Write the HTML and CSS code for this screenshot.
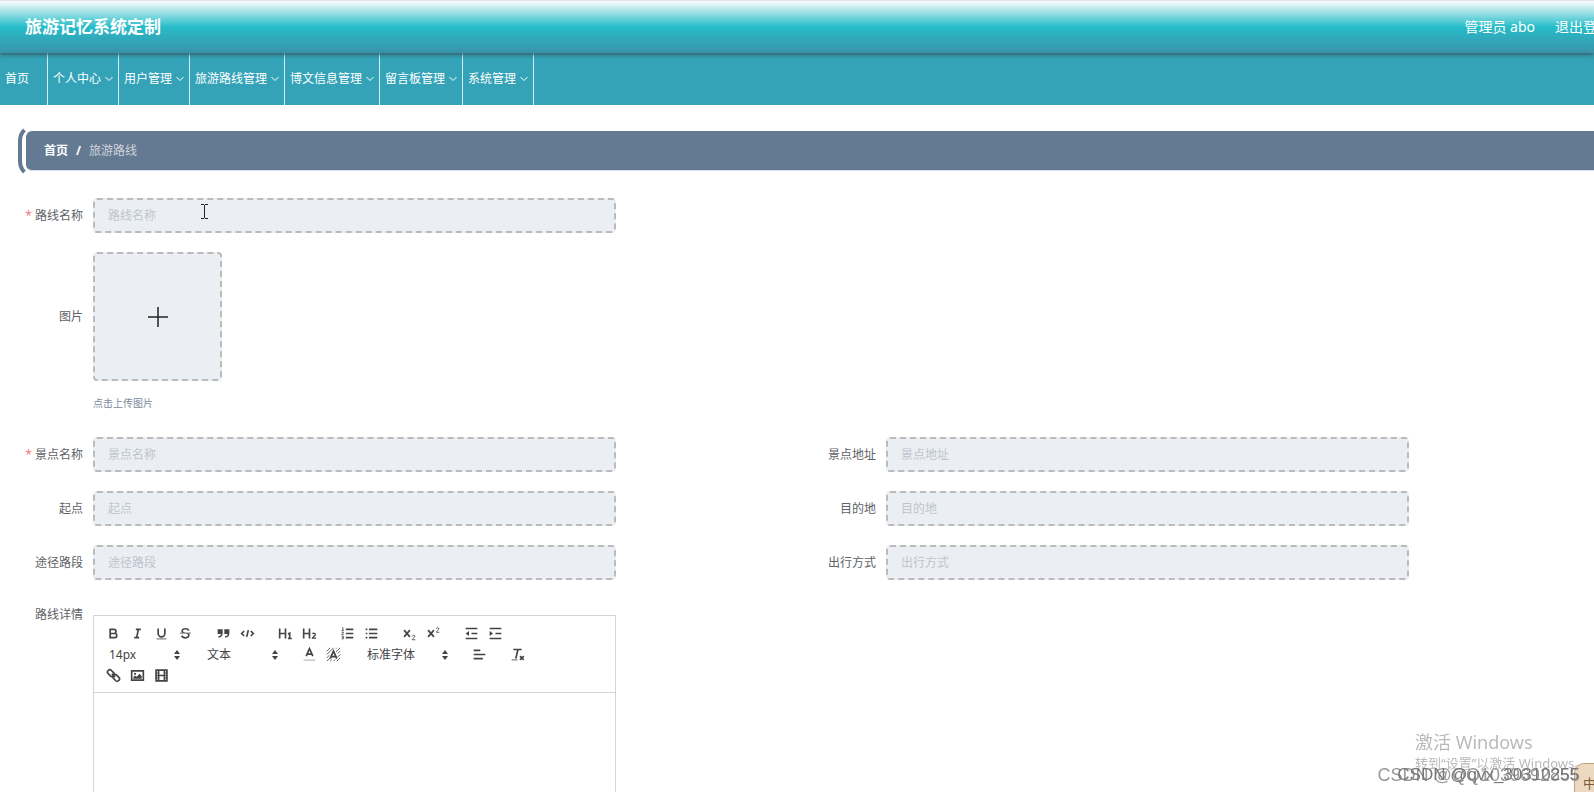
FILE: index.html
```
<!DOCTYPE html>
<html lang="zh-CN">
<head>
<meta charset="utf-8">
<title>旅游记忆系统定制</title>
<link rel="stylesheet" href="styles.css">
</head>
<body>
<header class="header">
  <h1 class="title">旅游记忆系统定制</h1>
  <div class="user"><span>管理员 abo</span><a class="logout" href="#">退出登录</a></div>
</header>
<nav class="nav">
  <a class="nav-item" href="#">首页</a>
  <a class="nav-item" href="#">个人中心<svg class="arrow" viewBox="0 0 8 8"><path d="M0.500 2l3.500 3.500L7.500 2"/></svg></a>
  <a class="nav-item" href="#">用户管理<svg class="arrow" viewBox="0 0 8 8"><path d="M0.500 2l3.500 3.500L7.500 2"/></svg></a>
  <a class="nav-item" href="#">旅游路线管理<svg class="arrow" viewBox="0 0 8 8"><path d="M0.500 2l3.500 3.500L7.500 2"/></svg></a>
  <a class="nav-item" href="#">博文信息管理<svg class="arrow" viewBox="0 0 8 8"><path d="M0.500 2l3.500 3.500L7.500 2"/></svg></a>
  <a class="nav-item" href="#">留言板管理<svg class="arrow" viewBox="0 0 8 8"><path d="M0.500 2l3.500 3.500L7.500 2"/></svg></a>
  <a class="nav-item" href="#">系统管理<svg class="arrow" viewBox="0 0 8 8"><path d="M0.500 2l3.500 3.500L7.500 2"/></svg></a>
</nav>
<div class="crumbs"><svg class="crumb-edge" viewBox="0 0 8 46"><path d="M6.500 2Q2 6 2 13V33Q2 40 6.500 44"/></svg><a class="crumb-home" href="#">首页</a><span class="slash">/</span><span class="crumb-now">旅游路线</span></div>
<form class="form">
  <div class="field wide"><label class="label required" for="name">路线名称</label><input class="input" id="name" type="text" placeholder="路线名称"></div>
  <div class="field wide">
    <label class="label" for="picture">图片</label>
    <div class="upload">
      <button class="upload-box" id="picture" type="button" aria-label="上传图片"><svg class="plus" viewBox="0 0 20 20"><path d="M10 0v20M0 10h20"/></svg></button>
    </div>
  </div>
  <p class="hint wide">点击上传图片</p>
  <div class="field"><label class="label required" for="spot">景点名称</label><input class="input" id="spot" type="text" placeholder="景点名称"></div>
  <div class="field"><label class="label" for="address">景点地址</label><input class="input" id="address" type="text" placeholder="景点地址"></div>
  <div class="field"><label class="label" for="start">起点</label><input class="input" id="start" type="text" placeholder="起点"></div>
  <div class="field"><label class="label" for="end">目的地</label><input class="input" id="end" type="text" placeholder="目的地"></div>
  <div class="field"><label class="label" for="via">途径路段</label><input class="input" id="via" type="text" placeholder="途径路段"></div>
  <div class="field"><label class="label" for="mode">出行方式</label><input class="input" id="mode" type="text" placeholder="出行方式"></div>
  <div class="field detail wide">
    <label class="label" for="detail">路线详情</label>
    <div class="editor">
      <div class="toolbar">
        <div class="tools">
          <div class="group">
            <button class="tool" type="button" aria-label="粗体"><svg viewBox="0 0 18 18"><path class="s" d="M5 4h4.500a2.500 2.500 0 0 1 0 5H5zM5 9h5.500a2.500 2.500 0 0 1 0 5H5z"/></svg></button>
            <button class="tool" type="button" aria-label="斜体"><svg viewBox="0 0 18 18"><path class="s" d="M7 4h6M5 14h6M8 14l2-10"/></svg></button>
            <button class="tool" type="button" aria-label="下划线"><svg viewBox="0 0 18 18"><path class="s" d="M5 3v6a4 4 0 0 0 8 0V3"/><path class="f" d="M3 15h12v1H3z"/></svg></button>
            <button class="tool" type="button" aria-label="删除线"><svg viewBox="0 0 18 18"><path class="t" d="M15.500 8.500h-13"/><path class="f" d="M9 8C7 7.400 6 7 6 6c0-1.100 1.400-1.700 3-1.700S11.500 5 12 6l1.800-.9C13 3.200 11.200 2.300 9 2.300 6.200 2.300 4 3.700 4 6c0 1 .4 1.600 1 2zM9 9c2 .6 3 1 3 2.200 0 1.300-1.300 2-3 2S6 12.500 5.600 11.200l-2 .7C4.300 14 6.400 15.200 9 15.200c3 0 5-1.600 5-4 0-1-.3-1.600-.8-2.200z"/></svg></button>
          </div>
          <div class="group">
            <button class="tool" type="button" aria-label="引用"><svg viewBox="0 0 18 18"><path class="f" d="M2 4h6v5c0 3-2 5-5 5v-2c2 0 3-1 3-2.500H2zM10 4h6v5c0 3-2 5-5 5v-2c2 0 3-1 3-2.500h-4z"/></svg></button>
            <button class="tool" type="button" aria-label="代码"><svg viewBox="0 0 18 18"><path class="s" d="M5 6L2 9l3 3M13 6l3 3-3 3M10 5L8 13"/></svg></button>
          </div>
          <div class="group">
            <button class="tool" type="button" aria-label="标题一"><svg viewBox="0 0 18 18"><path class="s" d="M2 3v12M9 3v12M2 9h7M12 9.500l2-1V15M12 15h4.500"/></svg></button>
            <button class="tool" type="button" aria-label="标题二"><svg viewBox="0 0 18 18"><path class="s" d="M2 3v12M9 3v12M2 9h7"/><path class="m" d="M12.500 9.500c1-1.500 4-1 3.500 1-.4 1.500-3 2.500-3.500 4H17"/></svg></button>
          </div>
          <div class="group">
            <button class="tool" type="button" aria-label="有序列表"><svg viewBox="0 0 18 18"><path class="s" d="M7 4h9M7 9h9M7 14h9"/><path class="t" d="M2.500 2.500l1-.5v3.500M2 5.500h2.500M2 7.500h2v1l-2 2h2.500M2 12.500h2v3H2M2.500 14H4"/></svg></button>
            <button class="tool" type="button" aria-label="无序列表"><svg viewBox="0 0 18 18"><path class="s" d="M6 4h10M6 9h10M6 14h10M2 4h2M2 9h2M2 14h2"/></svg></button>
          </div>
          <div class="group">
            <button class="tool" type="button" aria-label="下标"><svg viewBox="0 0 18 18"><path class="s" d="M2.500 5l7 8M9.500 5l-7 8"/><path class="t" d="M12.500 12.500c0-2 3-2 3 0 0 1.500-3 2-3 4H16"/></svg></button>
            <button class="tool" type="button" aria-label="上标"><svg viewBox="0 0 18 18"><path class="s" d="M2.500 5l7 8M9.500 5l-7 8"/><path class="t" d="M12.500 3.500c0-2 3-2 3 0 0 1.500-3 2-3 4H16"/></svg></button>
          </div>
          <div class="group">
            <button class="tool" type="button" aria-label="减少缩进"><svg viewBox="0 0 18 18"><path class="s" d="M2 3h14M2 15h14M9 9h7"/><path class="f" d="M6 6v6L2 9z"/></svg></button>
            <button class="tool" type="button" aria-label="增加缩进"><svg viewBox="0 0 18 18"><path class="s" d="M2 3h14M2 15h14M9 9h7"/><path class="f" d="M2 6v6l4-3z"/></svg></button>
          </div>
        </div>
        <div class="tools">
          <div class="pick size"><select aria-label="字号"><option>14px</option></select><svg class="updown" viewBox="0 0 8 10"><path d="M1 4l3-4 3 4zM1 6l3 4 3-4z"/></svg></div>
          <div class="pick block"><select aria-label="段落"><option>文本</option></select><svg class="updown" viewBox="0 0 8 10"><path d="M1 4l3-4 3 4zM1 6l3 4 3-4z"/></svg></div>
          <div class="group">
            <button class="tool" type="button" aria-label="文字颜色"><svg viewBox="0 0 18 18"><path class="s" d="M5 11l4-9 4 9M6.500 8.500h5"/><path class="pale" d="M2 15h14v1.500H2z"/></svg></button>
            <button class="tool" type="button" aria-label="背景颜色"><svg viewBox="0 0 18 18"><path class="t" d="M1 5l4-4M1 9l8-8M1 13l3-3M1 17l4-4M5 17l2-2M9 17l2-2M13 17l4-4M14 12l3-3M12 2l1-1M12 6l5-5M14 8l3-3"/><path class="s" d="M5 14l4-9 4 9M6.500 11.500h5"/></svg></button>
          </div>
          <div class="pick font"><select aria-label="字体"><option>标准字体</option></select><svg class="updown" viewBox="0 0 8 10"><path d="M1 4l3-4 3 4zM1 6l3 4 3-4z"/></svg></div>
          <div class="group">
            <button class="tool" type="button" aria-label="对齐"><svg viewBox="0 0 18 18"><path class="s" d="M2 4h8M2 9h14M2 14h11"/></svg></button>
          </div>
          <div class="group">
            <button class="tool" type="button" aria-label="清除格式"><svg viewBox="0 0 18 18"><path class="s" d="M4 3h10M9.500 3L7 14M12 11l4.500 4.500M16.500 11L12 15.500"/><path class="f" d="M2 15h7v1H2z"/></svg></button>
          </div>
        </div>
        <div class="tools">
          <div class="group">
            <button class="tool" type="button" aria-label="链接"><svg viewBox="0 0 18 18"><g class="s"><rect x="1.500" y="3.500" width="9" height="5.500" rx="2.700" transform="rotate(45 6 6)"/><rect x="7.500" y="9" width="9" height="5.500" rx="2.700" transform="rotate(45 12 12)"/><path d="M7 7l4 4"/></g></svg></button>
            <button class="tool" type="button" aria-label="图片"><svg viewBox="0 0 18 18"><path class="s" d="M2 3.500h14v11H2z"/><circle class="f" cx="6" cy="7" r="1.300"/><path class="f" d="M4 13v-2l2-2 2 1.500L11.500 7 14 9.500V13z"/></svg></button>
            <button class="tool" type="button" aria-label="视频"><svg viewBox="0 0 18 18"><path class="s" d="M2.500 2.500h13v13h-13zM5.500 2.500v13M12.500 2.500v13M5.500 9h7"/><path class="t" d="M2 6h3M2 9h3M2 12h3M13 6h3M13 9h3M13 12h3"/></svg></button>
          </div>
        </div>
      </div>
      <textarea class="text" id="detail"></textarea>
    </div>
  </div>
</form>
<svg class="cursor" viewBox="0 0 7 15"><path d="M0 .5h3M4 .5h3M3.500 1v13M0 14.500h3M4 14.500h3"/></svg>
<div class="activate"><div class="activate-title">激活 Windows</div><div class="activate-text">转到“设置”以激活 Windows。</div></div>
<div class="ime">中</div>
<div class="mark mark-a">CSDN @QQ1039692855</div>
<div class="mark mark-b">CSDN @qvx_30310255</div>
</body>
</html>
```
FILE: styles.css
```
* { box-sizing: border-box; }
body {
  margin: 0;
  height: 100vh;
  overflow: hidden;
  background: #fff;
  color: #606266;
  font: 12px/18px "Noto Sans", "Noto Sans CJK SC", sans-serif;
}
a { color: inherit; text-decoration: none; }
button, input, select, textarea { font: inherit; color: inherit; }

.header {
  position: relative;
  z-index: 1;
  display: flex;
  align-items: center;
  justify-content: space-between;
  height: 53px;
  padding: 0 0 0 25px;
  overflow: hidden;
  border-top: 1px solid #dfe3e5;
  background: linear-gradient(#fafdfd, #26bcc8 50%, #3b93aa);
  box-shadow: 0 1px 5px #33484d;
  color: #fff;
}
.title { margin: 0; font-size: 17px; line-height: 24px; font-weight: 700; }
.user { display: flex; gap: 20px; margin-right: -17px; font-size: 14px; white-space: nowrap; }

.nav { display: flex; height: 52px; background: #34a3b8; color: #fff; }
.nav-item {
  display: flex;
  align-items: center;
  gap: 4px;
  padding: 0 5px;
  border-right: 1px solid #d3edf1;
}
.nav-item:first-child { padding-right: 18px; }
.arrow { width: 8px; height: 8px; fill: none; stroke: #fff; }

.crumbs {
  position: relative;
  display: flex;
  align-items: center;
  gap: 8px;
  height: 40px;
  margin: 26px 0 0 26px;
  padding: 1px 0 0 18px;
  border-bottom: 1px solid #d9dee8;
  border-radius: 6px 0 0 6px;
  background: #647a92;
  color: #d0d4da;
}
.crumb-edge {
  position: absolute;
  left: -8px;
  top: -3px;
  width: 8px;
  height: 46px;
  fill: none;
  stroke: #647a92;
  stroke-width: 4;
}
.crumb-home, .slash { color: #fff; font-weight: 700; }

.form {
  display: grid;
  grid-template-columns: 1fr 1fr;
  row-gap: 19px;
  padding: 27px 0 0 8px;
}
.wide { grid-column: 1 / -1; }
.field { display: flex; align-items: center; }
.label { width: 75px; margin-right: 10px; text-align: right; }
.required::before { content: "*"; margin-right: 3px; color: #f07a7a; }
.input {
  width: 66%;
  height: 35px;
  padding: 0 13px;
  border: 2px dashed #bbb;
  border-radius: 4px;
  background: #ebeff4;
}
.wide .input, .editor { width: 33%; }
.input::placeholder { color: #c0c4cc; opacity: 1; }
.upload-box {
  display: grid;
  place-items: center;
  width: 129px;
  height: 129px;
  border: 2px dashed #bbb;
  border-radius: 4px;
  background: #ebeff4;
}
.plus { width: 20px; height: 20px; stroke: #222; stroke-width: 1.5; }
.hint { margin: -6px 0 6px 85px; font-size: 10px; color: #7d8a9c; }

.detail { align-items: flex-start; margin-top: 16px; }
.detail .label { margin-top: -9px; }
.editor { border: 1px solid #d4d4d4; }
.toolbar { padding: 7px 7px 6px; border-bottom: 1px solid #d4d4d4; color: #444; }
.tools { display: flex; height: 21px; }
.group { display: flex; margin-right: 14px; }
.tool {
  width: 24px;
  height: 21px;
  padding: 3px 5px;
  border: 0;
  background: none;
}
.tool svg { display: block; width: 15px; height: 15px; fill: none; }
.s { fill: none; stroke: #444; stroke-width: 2; }
.m { stroke: #444; stroke-width: 1.5; }
.t { stroke: #444; stroke-width: 1; }
.f { fill: #444; }
.pale { fill: #bbb; }
.pick { position: relative; }
.pick select {
  width: 100%;
  height: 21px;
  padding: 0 8px;
  border: 0;
  background: none;
  appearance: none;
}
.updown { position: absolute; right: 6px; top: 6px; width: 8px; height: 10px; fill: #444; }
.size, .block { width: 86px; margin-right: 12px; }
.font { width: 96px; margin-right: 12px; }
.text { display: block; width: 100%; height: 350px; border: 0; resize: none; }

.cursor { position: absolute; left: 201px; top: 204px; width: 7px; height: 15px; fill: none; stroke: #222; }
.activate { position: fixed; left: 1415px; bottom: 20px; color: #b8babb; white-space: nowrap; }
.activate-title { font-size: 18px; line-height: 24px; }
.activate-text { font-size: 13px; line-height: 18px; }
.mark {
  position: fixed;
  right: 15px;
  bottom: 7px;
  line-height: 20px;
  font-family: "Liberation Sans", sans-serif;
  white-space: nowrap;
}
.mark-a { color: #999; font-size: 18px; right: 14px; }
.mark-b { color: #777; font-size: 17px; }
.ime {
  position: fixed;
  right: -10px;
  bottom: -8px;
  width: 30px;
  height: 37px;
  padding: 10px 0 0 8px;
  border: 1px solid #c0a080;
  border-radius: 10px;
  background: #ecd9bf;
  color: #7a5a40;
  font-size: 13px;
}
```
